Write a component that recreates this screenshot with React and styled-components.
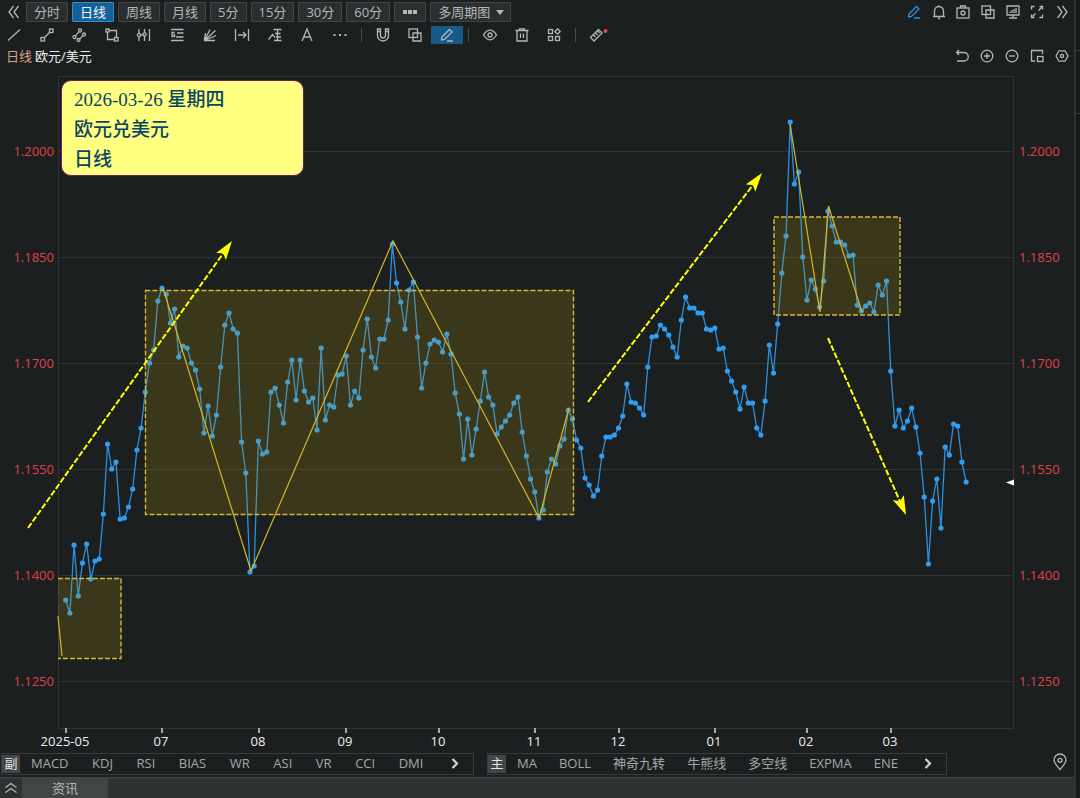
import React from "react";
import styled, { createGlobalStyle, css } from "styled-components";

const Global = createGlobalStyle`
  * { box-sizing: border-box; }
  body {
    margin: 0;
    background: #1c1f1f;
    color: #b4b7b7;
    font-family: "Open Sans", "Noto Sans CJK SC", sans-serif;
    font-size: 13px;
  }
  button, select { font: inherit; color: inherit; }
`;

const Page = styled.div`
  display: flex;
  min-height: 100vh;
`;

const Main = styled.main`
  flex: 1;
  min-width: 0;
  display: flex;
  flex-direction: column;
`;

const Rail = styled.aside`
  width: 6px;
  border-left: 2px solid #303333;
  background: #181b1b;
`;

const RailCell = styled.div`
  height: ${(p) => p.$size}px;
  border-bottom: 1px solid #3a3d3d;
`;

const Row = styled.div`
  display: flex;
  align-items: center;
  height: ${(p) => p.$height}px;
`;

const Periods = styled.div`
  display: flex;
  gap: 4px;
`;

const boxed = css`
  display: flex;
  align-items: center;
  height: 20px;
  border: 1px solid ${(p) => (p.$active ? "#2b8fce" : "#424546")};
  border-radius: 1px;
  background: ${(p) => (p.$active ? "#16609a" : "#2b2e2f")};
  color: ${(p) => (p.$active ? "#f2f6f8" : "#b4b7b7")};
`;

const PeriodButton = styled.button`
  ${boxed}
  padding: 0 7px;
  line-height: 18px;
  white-space: nowrap;
`;

const SelectBox = styled.label`
  ${boxed}
  padding: 0 6px 0 7px;
`;

const PlainSelect = styled.select`
  appearance: none;
  border: 0;
  padding: 0;
  width: 58px;
  height: 18px;
  line-height: 18px;
  background: transparent;
  outline: none;
`;

const IconButton = styled.button`
  display: flex;
  align-items: center;
  justify-content: center;
  flex: none;
  width: ${(p) => p.$width || 16}px;
  height: 18px;
  border: 0;
  padding: 0;
  background: ${(p) => (p.$active ? "#155a88" : "transparent")};
  color: ${(p) => p.$color || "#b4b7b7"};
`;

const Spread = styled.div`
  display: flex;
  justify-content: space-between;
  width: ${(p) => p.$width}px;
  margin: ${(p) => p.$margin};
`;

const Divider = styled.span`
  width: 1px;
  height: 14px;
  margin: 0 5px;
  background: #484b4c;
`;

const Symbol = styled.h1`
  margin: 0 0 0 6px;
  font-size: 13px;
  font-weight: 400;
  line-height: 20px;
  color: #eceeee;
`;

const Period = styled.span`
  margin-right: 3px;
  color: #d8a383;
`;

const ChartArea = styled.section`
  position: relative;
`;

const ChartSvg = styled.svg`
  display: block;
  width: 100%;
  height: auto;
  font-size: 13px;
`;

const Note = styled.div`
  position: absolute;
  left: 61px;
  top: 14px;
  width: 243px;
  padding: 4px 12px 0;
  border: 1px solid #7a1560;
  border-radius: 10px;
  background: #ffff80;
  color: #0c4666;
  font-family: "Liberation Serif", "Noto Sans CJK SC", serif;
  font-size: 19px;
  font-weight: 500;
  line-height: 30px;
`;

const NoteLine = styled.p`
  margin: 0;
`;

const Indicators = styled.div`
  display: flex;
  align-items: flex-start;
  gap: 13px;
  height: 25px;
  padding: 1px 6px 0 1px;
`;

const IndicatorBox = styled.div`
  display: flex;
  align-items: center;
  width: ${(p) => p.$width}px;
  height: 22px;
  border: 1px solid #383b3c;
`;

const IndicatorTag = styled.span`
  width: 18px;
  height: 18px;
  margin-right: 11px;
  background: #434748;
  color: #e4e6e6;
  line-height: 16px;
  text-align: center;
`;

const IndicatorList = styled.div`
  flex: 1;
  display: flex;
  align-items: center;
  justify-content: space-between;
  padding-right: 10px;
`;

const IndicatorButton = styled.button`
  height: 18px;
  border: 0;
  padding: 0 0 2px;
  background: transparent;
  line-height: 16px;
  color: #a4a7a7;
  white-space: nowrap;
`;

const PinSlot = styled.div`
  margin-left: auto;
`;

const Footer = styled.footer`
  display: flex;
  height: 21px;
  border-top: 1px solid #404344;
  background: #2f3233;
`;

const FooterToggle = styled(IconButton)`
  height: 20px;
`;

const FooterTab = styled.button`
  width: 86px;
  border: 0;
  padding: 0;
  background: #414546;
  line-height: 20px;
  color: #b4b7b7;
`;

const Dot = styled.circle`
  fill: #e8484e;
  stroke: none;
`;

const ICONS = {
  back: <path d="M7.500 2 3 8l4.500 6M12.500 2 8 8l4.500 6" />,
  forward: <path d="M3.500 2 8 8l-4.500 6M8.500 2 13 8l-4.500 6" />,
  line: <path d="M2 13.500 14 2.500" />,
  segment: <><rect x="2" y="10.500" width="3.500" height="3.500" /><rect x="10.500" y="2" width="3.500" height="3.500" /><path d="m5.500 10.500 5-5" /></>,
  channel: <><circle cx="3.500" cy="10" r="1.500" /><circle cx="9" cy="3.500" r="1.500" /><circle cx="7.500" cy="13" r="1.500" /><circle cx="13" cy="7.500" r="1.500" /><path d="m4.500 8.800 3.600-4.200M8.600 12l3.300-3.400" /></>,
  frame: <><path d="M5 3.500h7.500v7M3.500 5v7.500h7" /><rect x="2" y="2" width="3" height="3" /><rect x="10.500" y="10.500" width="3.500" height="3.500" /></>,
  levels: <><path d="M3 2v4.400m0 3.200V14M8.500 2v3.800m0 3.200v5M13.500 2v12M4.600 8l2.300-.4" /><circle cx="3" cy="8" r="1.600" /><circle cx="8.500" cy="7.400" r="1.600" /></>,
  fib: <path d="M2 2.500h12.500M8 6h6.500M7 10h7.500M2 13.500h12.500M5.500 5.500H3v4h2.500V7.500H4.500" />,
  fan: <path d="M2.500 13.500 3.500 6M2.500 13.500 8 2.500M2.500 13.500l11-10M2.500 13.500 14 8.500M2.500 13.500H13M2.500 10.500v3h3" />,
  range: <path d="M1.500 2v12M14.500 2v12M4 8h8M9 5l3 3-3 3" />,
  wave: <path d="m1.500 12.500 4-5 2.500 3M6.500 2.500h8M10.500 2.500v11M7 13.500h7.500M8 6.500h5.500M9 10h5" />,
  letter: <path d="m3 14 5-12 5 12M4.800 10h6.400" />,
  dots: <path d="M1.500 8h2m3.500 0h2m3.500 0h2" strokeWidth="2" />,
  magnet: <path d="M2.500 2h3v6.500a2.500 2.500 0 0 0 5 0V2h3v6.500a5.500 5.500 0 0 1-11 0zM2.500 4.500h3M10.500 4.500h3" />,
  copy: <><rect x="2" y="2" width="8.500" height="8.500" /><path d="M6 6h8v8H6z" /></>,
  pencil: <path d="m3 10 7.500-7.500 2.500 2.500L5.500 12.500 2.500 13zM8 14h6" />,
  eye: <><path d="M1.500 8Q4.500 3.200 8 3.200T14.500 8Q11.500 12.800 8 12.800T1.500 8z" /><circle cx="8" cy="8" r="2" /></>,
  trash: <path d="M1.500 3.500h13M5.500 3V1.800h5V3M3 3.500V14h10V3.500M6.500 6.500v4.500M9.500 6.500v4.500" />,
  blocks: <><rect x="2.500" y="2.500" width="4" height="4" /><rect x="2.500" y="9.500" width="4" height="4" /><rect x="9.500" y="9.500" width="4" height="4" /><path d="m11.500 1.800 2.700 2.700-2.700 2.700-2.700-2.700z" /></>,
  ruler: <><path d="M1.500 10.500 9.500 2.500 13 6 5 14zM4.500 8l2 2M6.500 6l2 2M8.500 4l2 2" /><Dot cx="16.500" cy="4" r="2" /></>,
  bell: <path d="M2 12.500h12M3.500 12.500V7a4.500 4.500 0 0 1 9 0v5.500M7 14.500h2M8 2.500V1.200" />,
  camera: <><rect x="2" y="4" width="12" height="10" /><path d="M5.500 4V2h5v2" /><circle cx="8" cy="9" r="2" /></>,
  monitor: <path d="M2 2h12v9H2zM8 11v2.500M4 14h8M5 9V7.500M7 9V6M9 9V5M11 9V4" />,
  expand: <path d="M5.500 2.500h-3v3M10.500 2.500h3v3M2.500 10.500v3h3M13.500 10.500v3h-3M9.500 6.500l3-3M6.500 9.500l-3 3" />,
  undo: <path d="M5 2 2.500 4.500 5 7M2.500 4.500H10a4 4 0 0 1 0 8.500H3" />,
  plus: <><circle cx="8" cy="8" r="5.800" /><path d="M5 8h6M8 5v6" /></>,
  minus: <><circle cx="8" cy="8" r="5.800" /><path d="M5 8h6" /></>,
  window: <><path d="M13.500 6V2.500h-11v10.500H6" /><rect x="8.500" y="8.500" width="5.500" height="5" /></>,
  hexagon: <><path d="M5 2.800h6L14 8l-3 5.200H5L2 8z" /><circle cx="8" cy="8" r="1.600" /></>,
  next: <path d="m5.500 3 4.500 4.500-4.500 4.500" strokeWidth="2.200" />,
  pin: <><path d="M8 15.500C4.500 11.500 2 9 2 6a6 6 0 0 1 12 0c0 3-2.500 5.500-6 9.500z" /><circle cx="8" cy="6.300" r="2" /></>,
  up: <path d="m2.500 7.500 5.500-4 5.500 4M2.500 12.500l5.500-4 5.500 4" />,
};

const Glyph = ({ name }) => (
  <svg width="16" height="16" viewBox="0 0 16 16" fill="none" stroke="currentColor" strokeWidth="1.3" overflow="visible" aria-hidden="true">
    {ICONS[name]}
  </svg>
);

const Tool = ({ name, label, ...rest }) => (
  <IconButton type="button" aria-label={label} {...rest}>
    <Glyph name={name} />
  </IconButton>
);

const PERIODS = ["分时", "日线", "周线", "月线", "5分", "15分", "30分", "60分"];

const DRAW_TOOLS = [
  ["line", "直线"], ["segment", "线段"], ["channel", "通道"], ["frame", "矩形"],
  ["levels", "周期线"], ["fib", "黄金分割"], ["fan", "扇形线"], ["range", "区间"],
  ["wave", "波浪"], ["letter", "文字"], ["dots", "更多"],
];

const WINDOW_TOOLS = [
  ["pencil", "画线"], ["bell", "预警"], ["camera", "截图"], ["copy", "叠加"],
  ["monitor", "监控"], ["expand", "全屏"], ["forward", "展开"],
];

const VIEW_TOOLS = [
  ["undo", "撤销"], ["plus", "放大"], ["minus", "缩小"], ["window", "小窗"], ["hexagon", "设置"],
];

const SUB = ["MACD", "KDJ", "RSI", "BIAS", "WR", "ASI", "VR", "CCI", "DMI"];
const MAIN = ["MA", "BOLL", "神奇九转", "牛熊线", "多空线", "EXPMA", "ENE"];

const PRICES = [
  600, 613, 545, 596, 563, 544, 579, 561, 559, 514, 444, 469, 462, 519, 518, 507, 489, 450, 428, 392,
  363, 350, 301, 288, 294, 323, 309, 357, 346, 348, 363, 370, 389, 433, 406, 436, 415, 367, 325, 313,
  329, 333, 442, 473, 572, 566, 441, 454, 452, 392, 388, 405, 423, 382, 360, 400, 360, 391, 402, 398,
  430, 348, 420, 405, 407, 375, 374, 356, 405, 391, 398, 350, 319, 357, 368, 339, 339, 320, 244, 283,
  302, 329, 290, 282, 337, 388, 363, 344, 340, 342, 352, 334, 354, 393, 414, 459, 419, 455, 429, 401,
  372, 397, 405, 434, 427, 421, 415, 403, 397, 432, 456, 479, 492, 518, 510, 472, 459, 464, 446, 439,
  410, 419, 440, 448, 478, 485, 496, 490, 456, 437, 437, 435, 428, 416, 384, 402, 403, 408, 415, 367,
  337, 336, 325, 329, 335, 347, 357, 320, 297, 308, 308, 313, 313, 329, 330, 328, 349, 348, 371, 381,
  392, 409, 387, 403, 403, 428, 435, 401, 345, 373, 324, 273, 236, 122, 184, 172, 257, 300, 280, 289,
  307, 281, 211, 226, 242, 242, 245, 256, 255, 305, 311, 306, 303, 312, 285, 295, 281, 371, 426, 410,
  428, 421, 408, 427, 453, 497, 564, 501, 479, 528, 447, 455, 424, 426, 462, 482,
];
const POINTS = PRICES.map((y, i) => [65.7 + i * 4.188, y]);

const LEVELS = [["1.2000", 151.5], ["1.1850", 257.5], ["1.1700", 363.5], ["1.1550", 469.5], ["1.1400", 575.5], ["1.1250", 681.5]];
const MONTHS = [["2025-05", 66], ["07", 162], ["08", 259], ["09", 346], ["10", 439], ["11", 535], ["12", 619], ["01", 715], ["02", 807], ["03", 891]];
const ARROWS = [[28, 528, 232, 241], [588, 402, 762, 173], [828, 338, 906, 515]];

function Arrow({ from: [x1, y1], to: [x2, y2] }) {
  const length = Math.hypot(x2 - x1, y2 - y1);
  const angle = (Math.atan2(y2 - y1, x2 - x1) * 180) / Math.PI;
  return (
    <g transform={`translate(${x1} ${y1}) rotate(${angle})`}>
      <path d={`M0 0H${length - 14}`} stroke="#ff0" strokeWidth="2" strokeDasharray="6 2" />
      <path d={`M${length} 0l-19-6 4 6-4 6z`} fill="#ff0" />
    </g>
  );
}

function Chart() {
  return (
    <ChartSvg viewBox="0 66 1074 686" role="img" aria-label="欧元/美元 日线">
      <g stroke="#303334" fill="none">
        <path d="M58.500 76.500H1013.500V728.500H58.500z" />
        {LEVELS.map(([label, y]) => <path key={label} d={`M58 ${y}H1013`} />)}
      </g>
      <g fill="#e0404a">
        {LEVELS.map(([label, y]) => (
          <g key={label}>
            <text x="54" y={y + 4} textAnchor="end">{label}</text>
            <text x="1019" y={y + 4}>{label}</text>
          </g>
        ))}
      </g>
      <g fill="#eceeee" textAnchor="middle">
        {MONTHS.map(([label, x]) => (
          <g key={label}>
            <path d={`M${x} 728v5`} stroke="#d4d6d6" strokeWidth="1.500" />
            <text x={x - 1} y="746">{label}</text>
          </g>
        ))}
      </g>
      <polyline points={POINTS.map((p) => p.join()).join(" ")} fill="none" stroke="#2f8fdc" strokeWidth="1.300" />
      <g fill="#2f9df0">
        {POINTS.map(([x, y]) => <circle key={x} cx={x} cy={y} r="2.600" />)}
      </g>
      <g fill="#c8a50a" fillOpacity="0.18">
        <path d="M58 578h63v80H58z" />
        <path d="M145.500 290.500h428v224h-428z" />
        <path d="M774 217h126v98H774z" />
      </g>
      <g fill="none" stroke="#d6b834" strokeWidth="1.400" strokeDasharray="5 2">
        <path d="M58 578.500h63v80H58" />
        <path d="M145.500 290.500h428v224h-428z" />
        <path d="M774 217h126v98H774z" />
      </g>
      <g fill="none" stroke="#d6b62a" strokeWidth="1.200">
        <path d="M58 616 62 656" />
        <path d="M163 288 251 571 393 241 539 518 569 408" />
        <path d="M790 124 820 312 828.500 206 862 312" />
      </g>
      {ARROWS.map(([x1, y1, x2, y2]) => <Arrow key={x1} from={[x1, y1]} to={[x2, y2]} />)}
      <path d="M1006 482.500l8-3v6z" fill="#fff" />
    </ChartSvg>
  );
}

const IndicatorGroup = ({ tag, items, width }) => (
  <IndicatorBox $width={width}>
    <IndicatorTag>{tag}</IndicatorTag>
    <IndicatorList>
      {items.map((item) => <IndicatorButton type="button" key={item}>{item}</IndicatorButton>)}
      <Tool name="next" label="更多指标" $color="#d0d2d2" />
    </IndicatorList>
  </IndicatorBox>
);

export default function App() {
  return (
    <Page>
      <Global />
      <Main>
        <Row $height={24}>
          <Spread $width={16} $margin="0 4px 0 6px">
            <Tool name="back" label="收起" />
          </Spread>
          <Periods>
            {PERIODS.map((label) => (
              <PeriodButton type="button" key={label} $active={label === "日线"}>{label}</PeriodButton>
            ))}
            <PeriodButton type="button" aria-label="更多周期">
              <svg width="16" height="4" viewBox="0 0 16 4" fill="currentColor" aria-hidden="true">
                <path d="M1 0h4v4H1zM6 0h4v4H6zM11 0h4v4h-4z" />
              </svg>
            </PeriodButton>
            <SelectBox>
              <PlainSelect aria-label="多周期图">
                <option>多周期图</option>
              </PlainSelect>
              <svg width="8" height="5" viewBox="0 0 8 5" fill="currentColor" aria-hidden="true">
                <path d="M0 0h8L4 5z" />
              </svg>
            </SelectBox>
          </Periods>
          <Spread $width={164} $margin="0 4px 0 auto">
            {WINDOW_TOOLS.map(([name, label]) => (
              <Tool key={name} name={name} label={label} $color={name === "pencil" ? "#2f8fdc" : undefined} />
            ))}
          </Spread>
        </Row>
        <Row $height={22}>
          <Spread $width={342} $margin="0 8px 0 6px">
            {DRAW_TOOLS.map(([name, label]) => <Tool key={name} name={name} label={label} />)}
          </Spread>
          <Divider />
          <Tool name="magnet" label="磁吸" $width={32} />
          <Tool name="copy" label="复制" $width={32} />
          <Tool name="pencil" label="连续画线" $width={32} $active />
          <Divider />
          <Tool name="eye" label="显示" $width={32} />
          <Tool name="trash" label="删除" $width={32} />
          <Tool name="blocks" label="管理" $width={32} />
          <Divider />
          <Tool name="ruler" label="测量" $width={32} />
        </Row>
        <Row $height={20}>
          <Symbol><Period>日线</Period>欧元/美元</Symbol>
          <Spread $width={116} $margin="0 4px 0 auto">
            {VIEW_TOOLS.map(([name, label]) => <Tool key={name} name={name} label={label} />)}
          </Spread>
        </Row>
        <ChartArea>
          <Chart />
          <Note>
            <NoteLine>2026-03-26 星期四</NoteLine>
            <NoteLine>欧元兑美元</NoteLine>
            <NoteLine>日线</NoteLine>
          </Note>
        </ChartArea>
        <Indicators>
          <IndicatorGroup tag="副" items={SUB} width={473} />
          <IndicatorGroup tag="主" items={MAIN} width={460} />
          <PinSlot>
            <Tool name="pin" label="定位" />
          </PinSlot>
        </Indicators>
        <Footer>
          <FooterToggle type="button" aria-label="展开" $width={22}>
            <Glyph name="up" />
          </FooterToggle>
          <FooterTab type="button">资讯</FooterTab>
        </Footer>
      </Main>
      <Rail>
        <RailCell $size={51} />
        <RailCell $size={63} />
      </Rail>
    </Page>
  );
}
